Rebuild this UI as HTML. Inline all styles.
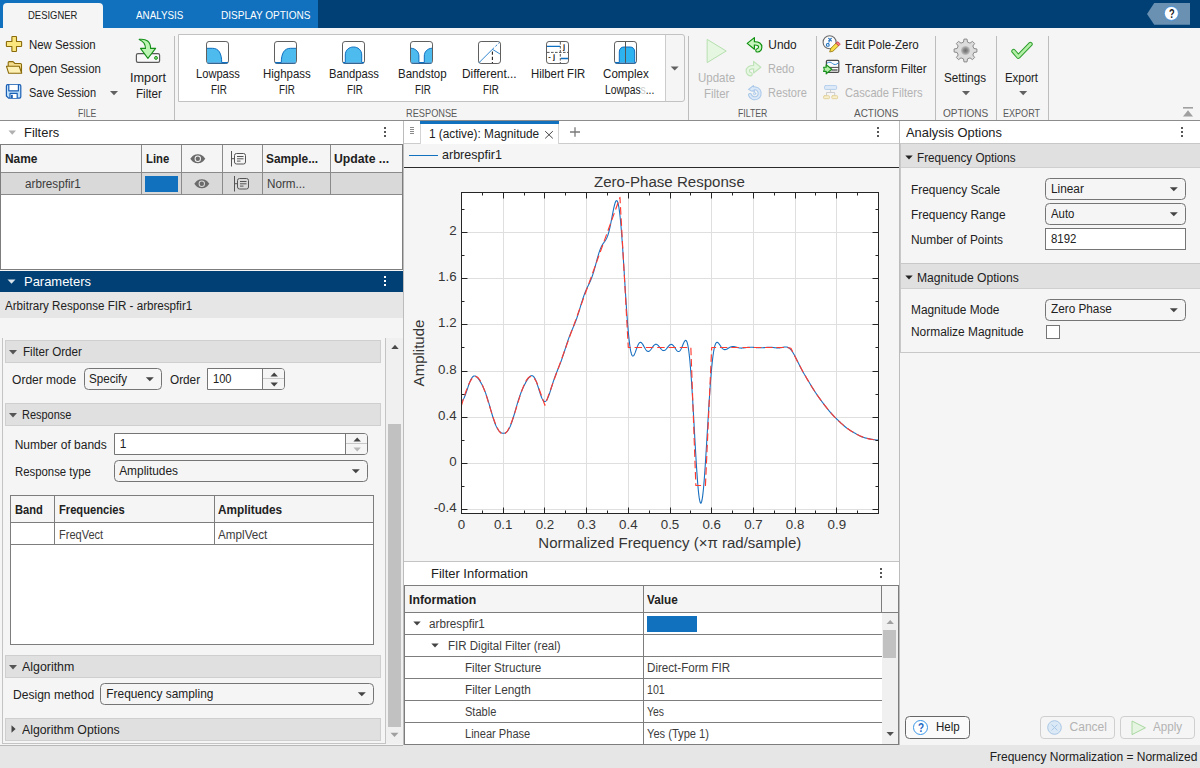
<!DOCTYPE html>
<html><head><meta charset="utf-8"><title>Filter Designer</title>
<style>
html,body{margin:0;padding:0}
body{width:1200px;height:768px;overflow:hidden;background:#f5f5f5;position:relative;font-family:"Liberation Sans",Arial,sans-serif;color:#212121}
.b{position:absolute;box-sizing:border-box}
.t{position:absolute;white-space:nowrap;line-height:1;margin:0;padding:0;transform-origin:0 0}
.hd{background:#e0e0e0;border:1px solid #cfcfcf}
.dd{background:#f5f5f5;border:1px solid #757575;border-radius:4.5px}
.ed{background:#fff;border:1px solid #757575}
.vl{width:1px;background:#bdbdbd}
.hl{height:1px;background:#7d7d7d}
svg{position:absolute;overflow:visible}
</style></head><body>
<!-- tab bar -->
<div class="b" style="left:0;top:0;width:1200px;height:28px;background:#004074"></div>
<div class="b" style="left:0;top:0;width:318px;height:28px;background:#1171be"></div>
<div class="b" style="left:3px;top:3px;width:100px;height:25px;background:#f5f5f5;border-radius:4px 4px 0 0"></div>
<svg style="left:1146px;top:3px" width="45" height="22"><path d="M1 11L8.25 0H44V21.75H8.25Z" fill="#6a90b2"/><circle cx="25.4" cy="10.4" r="7" fill="#fff" stroke="#3a8ee0" stroke-width="0.8"/></svg>
<!-- toolstrip -->
<div class="b" style="left:0;top:28px;width:1200px;height:92px;background:#f5f5f5"></div>
<div class="b hl" style="left:0;top:120px;width:1200px;background:#8c8c8c"></div>
<div class="b vl" style="left:174px;top:36px;height:84px"></div>
<div class="b vl" style="left:688px;top:36px;height:84px"></div>
<div class="b vl" style="left:816px;top:36px;height:84px"></div>
<div class="b vl" style="left:935px;top:36px;height:84px"></div>
<div class="b vl" style="left:996px;top:36px;height:84px"></div>
<div class="b vl" style="left:1048px;top:36px;height:84px"></div>
<div class="b" style="left:178px;top:34px;width:507px;height:68px;background:#f5f5f5;border:1px solid #c2c2c2;border-radius:0 3px 3px 0"></div>
<div class="b" style="left:179px;top:35px;width:487px;height:66px;background:#fff;border-right:1px solid #cccccc"></div>
<!-- File icons -->
<svg style="left:0;top:0" width="1200" height="120"><g stroke-linejoin="round">
<path d="M12.5 36.5H15.9Q16.5 36.5 16.5 37.1V41.5H21Q21.6 41.5 21.6 42.1V45.9Q21.6 46.5 21 46.5H16.5V50.9Q16.5 51.5 15.9 51.5H12.5Q11.9 51.5 11.9 50.9V46.5H7Q6.4 46.5 6.4 45.9V42.1Q6.4 41.5 7 41.5H11.9V37.1Q11.9 36.5 12.5 36.5Z" fill="#fbe77e" stroke="#8a6a0a" stroke-width="1.1"/>
<path d="M8.2 66V62.6Q8.2 61.6 9.2 61.6H13L14.9 63.5H20.4Q21.5 63.5 21.5 64.6V73" fill="#f3dd8c" stroke="#8a6a0a" stroke-width="1.1"/>
<path d="M6.5 66.3H19.2L21.7 73.3H8.7Z" fill="#fdf0b4" stroke="#8a6a0a" stroke-width="1.1"/>
<path d="M7.6 84.6H19.4Q20.8 84.6 20.8 86V96.8Q20.8 98.2 19.4 98.2H8.6L6.4 96V86Q6.4 84.6 7.6 84.6Z" fill="#bfe0fb" stroke="#1a5fb4" stroke-width="1.2"/>
<path d="M8.8 84.8V90.8H18.4V84.8" fill="#fff" stroke="#1a5fb4" stroke-width="1.2"/>
<path d="M10 98V93.4H17.2V98" fill="#fff" stroke="#1a5fb4" stroke-width="1.2"/>
<rect x="11" y="94.8" width="1.8" height="3.2" fill="#1a5fb4"/>
<path d="M110 91H118L114 95.3Z" fill="#616161"/>
<!-- Import -->
<rect x="136.4" y="53.6" width="23.2" height="8.8" rx="1.6" fill="#f8f8f8" stroke="#5a5a5a" stroke-width="1.2"/>
<circle cx="156" cy="57.9" r="1.5" fill="#7bd06c" stroke="#2a9a2a" stroke-width="1"/>
<path d="M139.2 39.4C146.5 38.6 150.6 41.5 150.6 48.4H155.6L147.9 58.4L140.5 48.4H145.5C145.5 44.5 143.5 41.2 139.2 39.4Z" fill="#bdf5b4" stroke="#16901a" stroke-width="1.1"/>
</g></svg>
<!-- gallery icons -->
<svg style="left:206px;top:41px" width="23" height="23"><rect x="0.5" y="0.5" width="22" height="22" rx="2.6" fill="#fff" stroke="#5f5f5f"/><path d="M1 7.3H6.5C12.5 7.3 15.7 12 15.7 21.5H1Z" fill="#4dbbee"/><path d="M1 7.3H6.5C12.5 7.3 15.7 12 15.7 21.5H22" fill="none" stroke="#0e6ec0" stroke-width="1"/><path d="M1.5 22H21.5" stroke="#0e6ec0" stroke-width="1"/></svg>
<svg style="left:274px;top:41px" width="23" height="23"><rect x="0.5" y="0.5" width="22" height="22" rx="2.6" fill="#fff" stroke="#5f5f5f"/><path d="M22 7.3H16.5C10.5 7.3 7.3 12 7.3 21.5H22Z" fill="#4dbbee"/><path d="M22 7.3H16.5C10.5 7.3 7.3 12 7.3 21.5H1" fill="none" stroke="#0e6ec0" stroke-width="1"/><path d="M1.5 22H21.5" stroke="#0e6ec0" stroke-width="1"/></svg>
<svg style="left:342px;top:41px" width="23" height="23"><rect x="0.5" y="0.5" width="22" height="22" rx="2.6" fill="#fff" stroke="#5f5f5f"/><path d="M3.3 21.5V14C3.3 9 7 6 11.5 6S19.7 9 19.7 14V21.5Z" fill="#4dbbee"/><path d="M1 21.5H3.3V14C3.3 9 7 6 11.5 6S19.7 9 19.7 14V21.5H22" fill="none" stroke="#0e6ec0" stroke-width="1"/><path d="M1.5 22H21.5" stroke="#0e6ec0" stroke-width="1"/></svg>
<svg style="left:410px;top:41px" width="23" height="23"><rect x="0.5" y="0.5" width="22" height="22" rx="2.6" fill="#fff" stroke="#5f5f5f"/><path d="M1 7.2C6 7.6 8.9 11 8.9 15V21.5H1Z" fill="#4dbbee"/><path d="M22 7.2C17 7.6 14.3 11 14.3 15V21.5H22Z" fill="#4dbbee"/><path d="M1 7.2C6 7.6 8.9 11 8.9 15V21.5H14.3V15C14.3 11 17 7.6 22 7.2" fill="none" stroke="#0e6ec0" stroke-width="1"/><path d="M1.5 22H21.5" stroke="#0e6ec0" stroke-width="1"/></svg>
<svg style="left:478px;top:41px" width="23" height="23"><rect x="0.5" y="0.5" width="22" height="22" rx="2.6" fill="#fff" stroke="#5f5f5f"/><path d="M1 21.7L14.4 8.3L21.9 12.9" fill="none" stroke="#1a78c8" stroke-width="0.9"/><path d="M14.4 8.3L21.5 1.5" fill="none" stroke="#1a78c8" stroke-width="0.9" stroke-dasharray="2.4 1.8"/><path d="M14.4 10.5V22" fill="none" stroke="#222" stroke-width="1.1" stroke-dasharray="3.2 2"/></svg>
<svg style="left:546px;top:41px" width="23" height="23"><rect x="0.5" y="0.5" width="22" height="22" rx="2.6" fill="#fff" stroke="#5f5f5f"/><path d="M14.3 1V22M1 11.4H22" stroke="#555" stroke-width="1" stroke-dasharray="2.6 1.4"/><path d="M1 5.4H14M15 17.5H22" stroke="#0e6ec0" stroke-width="1.3"/><text font-family="Liberation Sans, sans-serif" font-size="7.6" font-weight="700" fill="#222"><tspan x="16.9" y="7.5">j</tspan><tspan x="2.2" y="17.8">-</tspan><tspan x="6.9" y="17.9">j</tspan></text></svg>
<svg style="left:614px;top:41px" width="23" height="23"><rect x="0.5" y="0.5" width="22" height="22" rx="2.6" fill="#fff" stroke="#5f5f5f"/><path d="M5.3 21.5V11C5.3 7.6 7.4 6 10 6H16C18.8 6 20.7 7.6 20.7 11V21.5Z" fill="#2db4f0"/><path d="M1 21.5H5.3V11C5.3 7.6 7.4 6 10 6H16C18.8 6 20.7 7.6 20.7 11V21.5H22" fill="none" stroke="#0e6ec0" stroke-width="1"/><path d="M11.5 1V22" stroke="#555" stroke-width="1"/><path d="M1.5 22H21.5" stroke="#0e6ec0" stroke-width="1"/></svg>
<svg style="left:0;top:0" width="1200" height="120"><g stroke-linejoin="round" stroke-linecap="round">
<path d="M670.7 66.4H678.7L674.7 70.6Z" fill="#616161"/>
<!-- Update Filter play -->
<path d="M707.5 39.6L726.2 51L707.5 62.4Z" fill="#e5f6e1" stroke="#b5e0ae" stroke-width="1"/>
<!-- undo -->
<path d="M754.4 43.4C758.5 43.2 760.4 45 760.2 47.2C760 49.2 758.8 50.2 757.4 50.4" stroke="#0f8f0f" stroke-width="4.4" fill="none"/>
<path d="M747.2 43.4L754.4 37.6V49.2Z" fill="#c8f5be" stroke="#0f8f0f" stroke-width="1.2"/>
<path d="M753.6 43.4C758.5 43.2 760.4 45 760.2 47.2C760 49.2 758.8 50.2 757.4 50.4" stroke="#c8f5be" stroke-width="2.2" fill="none"/>
<!-- redo -->
<path d="M753.6 67.2C749.5 67 747.6 68.8 747.8 71C748 73 749.2 74 750.6 74.2" stroke="#bfe3b8" stroke-width="4.4" fill="none"/>
<path d="M760.8 67.2L753.6 61.4V73Z" fill="#e5f6e1" stroke="#bfe3b8" stroke-width="1.2"/>
<path d="M754.4 67.2C749.5 67 747.6 68.8 747.8 71C748 73 749.2 74 750.6 74.2" stroke="#e5f6e1" stroke-width="2.2" fill="none"/>
<!-- restore -->
<path d="M751.5 89.5A5 5 0 1 1 750 95" stroke="#a9c8ea" stroke-width="4" fill="none"/>
<path d="M748.6 89.4L753.4 85.6L754.4 91.6Z" fill="#dbe8f7" stroke="#a9c8ea" stroke-width="1.1"/>
<path d="M751.5 89.5A5 5 0 1 1 750 95" stroke="#dbe8f7" stroke-width="2" fill="none"/>
<circle cx="754.6" cy="93.6" r="1.2" fill="#dbe8f7" stroke="#a9c8ea" stroke-width="0.9"/>
<!-- pole-zero -->
<circle cx="829.6" cy="42.3" r="6.5" fill="#fbfbfb" stroke="#6a6a6a" stroke-width="1.1"/>
<path d="M828.7 38.3L831.3 40.9M831.3 38.3L828.7 40.9" stroke="#1a6fc0" stroke-width="1.2"/>
<path d="M829.6 41L828.4 43.6" stroke="#1a6fc0" stroke-width="0.8" stroke-dasharray="1.2 1"/>
<circle cx="827.8" cy="44.9" r="1.4" fill="none" stroke="#1a6fc0" stroke-width="1.1"/>
<path d="M829.8 51.6L830.8 48.4L836.2 43L838.8 45.6L833.2 51Z" fill="#f9dc4a" stroke="#9c7e10" stroke-width="0.9"/>
<path d="M836.2 43L837.2 42Q837.8 41.6 838.4 42.2L839.6 43.4Q840.2 44 839.8 44.6L838.8 45.6Z" fill="#f47c7c" stroke="#c8384a" stroke-width="0.9"/>
<!-- transform -->
<rect x="826.4" y="60.4" width="12.4" height="12" rx="1.2" fill="#fafafa" stroke="#4a4a4a" stroke-width="1.2"/>
<path d="M827 67.4H838.4" stroke="#4a4a4a" stroke-width="1"/>
<path d="M827.2 63C829.4 61.4 831 62.2 832.6 63.6S836.4 65 838.2 63" fill="none" stroke="#3a8fd8" stroke-width="1"/>
<rect x="831.5" y="69" width="6" height="2" fill="#8a8a8a"/>
<path d="M823.6 67.2H826.2V64.8L831.8 69.3L826.2 73.8V71.4H823.6L824.3 69.3Z" fill="#b4f0a8" stroke="#16901a" stroke-width="1.1"/>
<!-- cascade -->
<rect x="824.6" y="85.6" width="12" height="3.8" rx="0.8" fill="#dfeaf8" stroke="#b4cfec" stroke-width="1"/>
<path d="M830.6 89.6V92.5M826.5 95.4V92.5H834.7V95.4" fill="none" stroke="#cdcdcd" stroke-width="1"/>
<rect x="823.6" y="95.7" width="5.8" height="3" rx="0.8" fill="#f8efcc" stroke="#e2d29c" stroke-width="1"/>
<rect x="831.8" y="95.7" width="5.8" height="3" rx="0.8" fill="#f8efcc" stroke="#e2d29c" stroke-width="1"/>
<!-- arrows -->
<path d="M962 91H970L966 95.3Z" fill="#616161"/>
<path d="M1019.2 91H1027.2L1023.2 95.3Z" fill="#616161"/>
<!-- export check -->
<path d="M1013.6 51.2L1018.3 56.6L1030.4 44.2" stroke="#2e9e2e" stroke-width="4.6" fill="none"/>
<path d="M1013.6 51.2L1018.3 56.6L1030.4 44.2" stroke="#b4f0a8" stroke-width="2.6" fill="none"/>
<!-- collapse -->
<rect x="1183" y="107" width="10" height="1.6" fill="#a0a0a0"/>
<path d="M1188 110.3L1193 116.6H1183Z" fill="#a0a0a0"/>
</g></svg>
<!-- settings gear -->
<svg style="left:952.8px;top:38.1px" width="25" height="25" viewBox="-12.5 -12.5 25 25"><defs><radialGradient id="gg"><stop offset="0" stop-color="#6e6e6e"/><stop offset="0.45" stop-color="#8a8a8a"/><stop offset="1" stop-color="#c4c4c4"/></radialGradient></defs><path d="M11.40 -1.53L11.40 1.53L8.36 2.01L7.33 4.49L9.14 6.98L6.98 9.14L4.49 7.33L2.01 8.36L1.53 11.40L-1.53 11.40L-2.01 8.36L-4.49 7.33L-6.98 9.14L-9.14 6.98L-7.33 4.49L-8.36 2.01L-11.40 1.53L-11.40 -1.53L-8.36 -2.01L-7.33 -4.49L-9.14 -6.98L-6.98 -9.14L-4.49 -7.33L-2.01 -8.36L-1.53 -11.40L1.53 -11.40L2.01 -8.36L4.49 -7.33L6.98 -9.14L9.14 -6.98L7.33 -4.49L8.36 -2.01Z" fill="#dcdcdc" stroke="#8a8a8a" stroke-width="1" stroke-linejoin="round"/><circle r="4.6" fill="url(#gg)"/></svg>

<!-- LEFT: Filters panel -->
<div class="b" style="left:0;top:121px;width:403px;height:23px;background:#fff"></div>
<svg style="left:7.8px;top:129.5px" width="10" height="6"><path d="M0.5 0.5H8L4.25 4.7Z" fill="#b0b0b0"/></svg>
<svg style="left:383px;top:127px" width="4" height="11"><rect x="1" y="0" width="2" height="2" fill="#575757"/><rect x="1" y="4" width="2" height="2" fill="#575757"/><rect x="1" y="8" width="2" height="2" fill="#575757"/></svg>
<div class="b" style="left:0;top:144px;width:403px;height:126px;background:#fff;border:1px solid #7d7d7d"></div>
<div class="b" style="left:1px;top:145px;width:401px;height:27px;background:#f5f5f5"></div>
<div class="b" style="left:1px;top:172px;width:401px;height:22px;background:#d9d9d9"></div>
<div class="b hl" style="left:1px;top:172px;width:401px;background:#8a8a8a"></div>
<div class="b hl" style="left:1px;top:194px;width:401px;background:#8a8a8a"></div>
<div class="b vl" style="left:141px;top:145px;height:49px;background:#8a8a8a"></div>
<div class="b vl" style="left:181px;top:145px;height:49px;background:#8a8a8a"></div>
<div class="b vl" style="left:222px;top:145px;height:49px;background:#8a8a8a"></div>
<div class="b vl" style="left:262px;top:145px;height:49px;background:#8a8a8a"></div>
<div class="b vl" style="left:330px;top:145px;height:49px;background:#8a8a8a"></div>
<div class="b" style="left:145px;top:176px;width:33px;height:16px;background:#1171be"></div>
<svg style="left:190px;top:154px" width="16" height="10"><path d="M0.3 4.8C3 0.8 6 0.3 7.8 0.3S12.6 0.8 15.3 4.8C12.6 8.8 9.6 9.3 7.8 9.3S3 8.8 0.3 4.8Z" fill="#6b6b6b"/><circle cx="7.8" cy="4.8" r="3.2" fill="#f5f5f5"/><circle cx="7.8" cy="4.8" r="2.2" fill="#6b6b6b"/></svg>
<svg style="left:194px;top:179px" width="16" height="10"><path d="M0.3 4.8C3 0.8 6 0.3 7.8 0.3S12.6 0.8 15.3 4.8C12.6 8.8 9.6 9.3 7.8 9.3S3 8.8 0.3 4.8Z" fill="#6b6b6b"/><circle cx="7.8" cy="4.8" r="3.2" fill="#d9d9d9"/><circle cx="7.8" cy="4.8" r="2.2" fill="#6b6b6b"/></svg>
<svg style="left:230px;top:151px" width="17" height="16"><path d="M1.5 0V15.5M1.5 7.7H4" stroke="#555" stroke-width="1" fill="none"/><rect x="4.5" y="2.5" width="11" height="10.5" rx="2" fill="none" stroke="#555" stroke-width="1"/><path d="M7 5.5H13.5M7 7.8H13.5M7 10.1H10.5" stroke="#555" stroke-width="1"/></svg>
<svg style="left:233px;top:176px" width="17" height="16"><path d="M1.5 0V15.5M1.5 7.7H4" stroke="#555" stroke-width="1" fill="none"/><rect x="4.5" y="2.5" width="11" height="10.5" rx="2" fill="none" stroke="#555" stroke-width="1"/><path d="M7 5.5H13.5M7 7.8H13.5M7 10.1H10.5" stroke="#555" stroke-width="1"/></svg>
<!-- Parameters panel -->
<div class="b" style="left:0;top:271px;width:403px;height:21px;background:#004074"></div>
<svg style="left:7px;top:279px" width="10" height="6"><path d="M0.5 0.5H8.5L4.5 4.8Z" fill="#d8e2ec"/></svg>
<svg style="left:383px;top:276px" width="4" height="11"><rect x="1" y="0" width="2" height="2" fill="#fff"/><rect x="1" y="4" width="2" height="2" fill="#fff"/><rect x="1" y="8" width="2" height="2" fill="#fff"/></svg>
<div class="b" style="left:0;top:292px;width:403px;height:26px;background:#e6e6e6"></div>
<div class="b" style="left:0;top:318px;width:404px;height:427px;background:#f5f5f5"></div>
<div class="b" style="left:2px;top:338px;width:384px;height:406px;border:1px solid #c4c4c4;border-top:none;background:#f5f5f5"></div>
<div class="b hl" style="left:0;top:745px;width:403px;background:#b8b8b8"></div>
<!-- scrollbar -->
<div class="b" style="left:386px;top:338px;width:17px;height:406px;background:#f0f0f0"></div>
<div class="b" style="left:388px;top:424px;width:13px;height:303px;background:#c1c1c1"></div>
<svg style="left:390.5px;top:344px" width="9" height="6"><path d="M0.3 4.9L4 0.7L7.7 4.9Z" fill="#4a4a4a"/></svg>
<svg style="left:390px;top:732px" width="9" height="6"><path d="M0.5 0.8L4.5 5L8.5 0.8Z" fill="#a0a0a0"/></svg>
<!-- section headers -->
<div class="b hd" style="left:5px;top:340px;width:376px;height:23px"></div>
<svg style="left:9px;top:349px" width="9" height="6"><path d="M0 1H8L4 5.4Z" fill="#555"/></svg>
<div class="b hd" style="left:5px;top:403px;width:376px;height:23px"></div>
<svg style="left:9px;top:412px" width="9" height="6"><path d="M0 1H8L4 5.4Z" fill="#555"/></svg>
<div class="b hd" style="left:5px;top:655px;width:376px;height:23px"></div>
<svg style="left:9px;top:664px" width="9" height="6"><path d="M0 1H8L4 5.4Z" fill="#555"/></svg>
<div class="b hd" style="left:5px;top:718px;width:376px;height:23px"></div>
<svg style="left:11px;top:725px" width="6" height="9"><path d="M0.5 0.3V7.7L4.6 4Z" fill="#444"/></svg>
<!-- order row -->
<div class="b dd" style="left:84px;top:368px;width:78px;height:22px"></div>
<svg style="left:145px;top:377px" width="9" height="6"><path d="M0.8 0.3H8.8L4.8 4.3Z" fill="#444"/></svg>
<div class="b ed" style="left:207px;top:368px;width:78px;height:22px;border-radius:0 4px 4px 0"></div>
<div class="b" style="left:262px;top:369px;width:22px;height:20px;background:#f5f5f5;border-left:1px solid #7a7a7a;border-radius:0 3px 3px 0"></div>
<div class="b hl" style="left:263px;top:378px;width:21px;background:#c8c8c8"></div>
<svg style="left:269.8px;top:372px" width="9" height="5"><path d="M0.5 4.5L4.2 0.6L7.9 4.5Z" fill="#444"/></svg>
<svg style="left:269.8px;top:382.4px" width="9" height="5"><path d="M0.5 0.5L4.2 4.4L7.9 0.5Z" fill="#444"/></svg>
<!-- bands -->
<div class="b ed" style="left:114px;top:433px;width:254px;height:22px;border-radius:0 4px 4px 0"></div>
<div class="b" style="left:345px;top:434px;width:22px;height:20px;background:#f5f5f5;border-left:1px solid #7a7a7a;border-radius:0 3px 3px 0"></div>
<div class="b hl" style="left:346px;top:443px;width:21px;background:#c8c8c8"></div>
<svg style="left:353px;top:437px" width="9" height="5"><path d="M0.5 4.5L4.2 0.6L7.9 4.5Z" fill="#444"/></svg>
<svg style="left:353px;top:447.4px" width="9" height="5"><path d="M0.5 0.5L4.2 4.4L7.9 0.5Z" fill="#b8b8b8"/></svg>
<div class="b dd" style="left:114px;top:460px;width:254px;height:22px"></div>
<svg style="left:351px;top:469px" width="9" height="6"><path d="M0.8 0.3H8.8L4.8 4.3Z" fill="#444"/></svg>
<!-- band table -->
<div class="b" style="left:10px;top:495px;width:364px;height:150px;background:#fff;border:1px solid #7d7d7d"></div>
<div class="b" style="left:11px;top:496px;width:362px;height:26px;background:#f5f5f5"></div>
<div class="b hl" style="left:10px;top:522px;width:364px"></div>
<div class="b hl" style="left:10px;top:544px;width:364px"></div>
<div class="b vl" style="left:54px;top:496px;height:49px;background:#7d7d7d"></div>
<div class="b vl" style="left:214px;top:496px;height:49px;background:#7d7d7d"></div>
<!-- algorithm -->
<div class="b dd" style="left:100px;top:683px;width:274px;height:22px"></div>
<svg style="left:357px;top:692px" width="9" height="6"><path d="M0.8 0.3H8.8L4.8 4.3Z" fill="#444"/></svg>

<!-- CENTER -->
<div class="b vl" style="left:403px;top:121px;height:624px;background:#bcbcbc"></div>
<div class="b" style="left:404px;top:121px;width:495px;height:23px;background:#fff"></div>
<div class="b hl" style="left:404px;top:143px;width:495px;background:#cccccc"></div>
<div class="b" style="left:420px;top:121px;width:139px;height:23px;background:#fff;border-left:1px solid #d4d4d4;border-right:1px solid #d4d4d4"></div>
<div class="b" style="left:420px;top:121px;width:139px;height:3px;background:#1171be"></div>
<svg style="left:410px;top:127px" width="5" height="8"><path d="M0 0.5H4M0 2.5H4M0 4.5H4M0 6.5H4" stroke="#8a8a8a" stroke-width="1"/></svg>
<svg style="left:544px;top:130px" width="10" height="10"><path d="M1.2 1.2L8.8 8.4M8.8 1.2L1.2 8.4" stroke="#444" stroke-width="1"/></svg>
<svg style="left:569px;top:126px" width="12" height="12"><path d="M6 1.2V10.8M1 6H11" stroke="#7a7a7a" stroke-width="1.3"/></svg>
<svg style="left:876px;top:127px" width="4" height="11"><rect x="1" y="0" width="2" height="2" fill="#575757"/><rect x="1" y="4" width="2" height="2" fill="#575757"/><rect x="1" y="8" width="2" height="2" fill="#575757"/></svg>
<div class="b" style="left:404px;top:144px;width:495px;height:23px;background:#f5f5f5"></div>
<div class="b" style="left:409px;top:154.5px;width:29px;height:1px;background:#1171be"></div>
<div class="b hl" style="left:404px;top:167px;width:495px;background:#2a2a2a"></div>
<div class="b" style="left:404px;top:168px;width:495px;height:393px;background:#f5f5f5"></div>
<div class="b hl" style="left:404px;top:561px;width:495px;background:#c4c4c4"></div>
<!-- filter info -->
<div class="b" style="left:404px;top:562px;width:495px;height:23px;background:#fff"></div>
<svg style="left:879px;top:568px" width="4" height="11"><rect x="1" y="0" width="2" height="2" fill="#575757"/><rect x="1" y="4" width="2" height="2" fill="#575757"/><rect x="1" y="8" width="2" height="2" fill="#575757"/></svg>
<div class="b" style="left:404px;top:585px;width:495px;height:160px;background:#fff;border:1px solid #7d7d7d"></div>
<div class="b" style="left:405px;top:586px;width:493px;height:27px;background:#f5f5f5"></div>
<div class="b hl" style="left:405px;top:612px;width:493px"></div>
<div class="b hl" style="left:405px;top:634px;width:477px"></div>
<div class="b hl" style="left:405px;top:656px;width:477px"></div>
<div class="b hl" style="left:405px;top:678px;width:477px"></div>
<div class="b hl" style="left:405px;top:700px;width:477px"></div>
<div class="b hl" style="left:405px;top:722px;width:477px"></div>
<div class="b vl" style="left:643px;top:586px;height:158px;background:#7d7d7d"></div>
<div class="b vl" style="left:881px;top:586px;height:27px;background:#7d7d7d"></div>
<div class="b" style="left:882px;top:613px;width:16px;height:131px;background:#f0f0f0"></div>
<div class="b" style="left:883px;top:630px;width:13px;height:28px;background:#c1c1c1"></div>
<svg style="left:886px;top:619px" width="9" height="6"><path d="M0.5 5L4.2 1L7.9 5Z" fill="#a0a0a0"/></svg>
<svg style="left:886px;top:731px" width="9" height="6"><path d="M0.5 1L4.2 5L7.9 1Z" fill="#505050"/></svg>
<div class="b" style="left:647px;top:616px;width:50px;height:16px;background:#1171be"></div>
<svg style="left:413.4px;top:621px" width="9" height="6"><path d="M0.3 0.5H7.7L4 4.6Z" fill="#444"/></svg>
<svg style="left:431px;top:643px" width="9" height="6"><path d="M0.3 0.5H7.7L4 4.6Z" fill="#444"/></svg>

<!-- RIGHT -->
<div class="b vl" style="left:899px;top:121px;height:624px;background:#bcbcbc"></div>
<div class="b" style="left:900px;top:121px;width:300px;height:23px;background:#fff"></div>
<svg style="left:1180px;top:127px" width="4" height="11"><rect x="1" y="0" width="2" height="2" fill="#575757"/><rect x="1" y="4" width="2" height="2" fill="#575757"/><rect x="1" y="8" width="2" height="2" fill="#575757"/></svg>
<div class="b" style="left:900px;top:144px;width:300px;height:601px;background:#f5f5f5"></div>
<div class="b" style="left:900px;top:143px;width:300px;height:121px;border:1px solid #c8c8c8;border-right:none"></div>
<div class="b" style="left:901px;top:144px;width:299px;height:24px;background:#e0e0e0;border-bottom:1px solid #cfcfcf"></div>
<svg style="left:905px;top:155px" width="9" height="6"><path d="M0.3 0.5H7.7L4 4.6Z" fill="#222"/></svg>
<div class="b" style="left:900px;top:263px;width:300px;height:90px;border:1px solid #c8c8c8;border-right:none"></div>
<div class="b" style="left:901px;top:264px;width:299px;height:25px;background:#e0e0e0;border-bottom:1px solid #cfcfcf"></div>
<svg style="left:905px;top:275px" width="9" height="6"><path d="M0.3 0.5H7.7L4 4.6Z" fill="#222"/></svg>
<div class="b dd" style="left:1045px;top:178px;width:141px;height:22px"></div>
<svg style="left:1169px;top:187px" width="9" height="6"><path d="M0.8 0.3H8.8L4.8 4.3Z" fill="#444"/></svg>
<div class="b dd" style="left:1045px;top:203px;width:141px;height:22px"></div>
<svg style="left:1169px;top:212px" width="9" height="6"><path d="M0.8 0.3H8.8L4.8 4.3Z" fill="#444"/></svg>
<div class="b ed" style="left:1045px;top:228px;width:141px;height:22px"></div>
<div class="b dd" style="left:1045px;top:299px;width:141px;height:22px"></div>
<svg style="left:1169px;top:308px" width="9" height="6"><path d="M0.8 0.3H8.8L4.8 4.3Z" fill="#444"/></svg>
<div class="b ed" style="left:1046px;top:325px;width:14px;height:14px"></div>
<!-- buttons -->
<div class="b" style="left:905px;top:716px;width:65px;height:23px;background:#fafafa;border:1px solid #666;border-radius:4.5px"></div>
<svg style="left:912px;top:719px" width="17" height="17"><circle cx="8.5" cy="8.5" r="7" fill="#fff" stroke="#3a96e8" stroke-width="1"/></svg>
<div class="b" style="left:1040px;top:716px;width:75px;height:23px;background:#f5f5f5;border:1px solid #cfcfcf;border-radius:4px"></div>
<svg style="left:1046.8px;top:720px" width="15" height="15"><circle cx="7.5" cy="7.5" r="6.8" fill="#dbe8f5" stroke="#a9c7e6" stroke-width="1"/><path d="M4.6 4.6L10.4 10.4M10.4 4.6L4.6 10.4" stroke="#a9c7e6" stroke-width="1"/></svg>
<div class="b" style="left:1120px;top:716px;width:75px;height:23px;background:#f5f5f5;border:1px solid #cfcfcf;border-radius:4px"></div>
<svg style="left:1131px;top:720px" width="16" height="16"><path d="M1 1L14.4 7.8L1 14.6Z" fill="#e6f4e2" stroke="#a8d8a0" stroke-width="1" stroke-linejoin="round"/></svg>
<!-- status bar -->
<div class="b" style="left:0;top:745px;width:1200px;height:23px;background:#e6e6e6"></div>
<div class="b hl" style="left:0;top:745px;width:403px;background:#b8b8b8"></div>

<svg id="plot" width="1200" height="768" viewBox="0 0 1200 768" style="position:absolute;left:0;top:0;pointer-events:none">
<rect x="461.5" y="192.5" width="417.0" height="321.0" fill="#fff"/>
<path d="M503.5 192.5V513.5M544.5 192.5V513.5M586.5 192.5V513.5M628.5 192.5V513.5M670.5 192.5V513.5M711.5 192.5V513.5M753.5 192.5V513.5M795.5 192.5V513.5M836.5 192.5V513.5M461.5 232.5H878.5M461.5 278.5H878.5M461.5 324.5H878.5M461.5 371.5H878.5M461.5 417.5H878.5M461.5 463.5H878.5M461.5 509.5H878.5" stroke="#dfdfdf" stroke-width="1" fill="none"/>
<clipPath id="cp"><rect x="461.5" y="192.5" width="417.0" height="321.0"/></clipPath>
<g clip-path="url(#cp)"><path d="M461.50 400.53 L461.80 400.50 L462.10 400.38 L462.39 400.20 L462.69 399.94 L462.99 399.62 L463.29 399.22 L463.58 398.76 L463.88 398.24 L464.18 397.66 L464.48 397.03 L464.78 396.34 L465.07 395.61 L465.37 394.84 L465.67 394.03 L465.97 393.19 L466.27 392.33 L466.56 391.44 L466.86 390.54 L467.16 389.63 L467.46 388.72 L467.75 387.81 L468.05 386.91 L468.35 386.02 L468.65 385.15 L468.95 384.30 L469.24 383.47 L469.54 382.68 L469.84 381.91 L470.14 381.19 L470.44 380.50 L470.73 379.86 L471.03 379.27 L471.33 378.72 L471.63 378.21 L471.93 377.76 L472.22 377.36 L472.52 377.01 L472.82 376.71 L473.12 376.46 L473.41 376.26 L473.71 376.10 L474.01 376.00 L474.31 375.94 L474.61 375.93 L474.90 375.96 L475.20 376.03 L475.50 376.14 L475.80 376.29 L476.10 376.47 L476.39 376.69 L476.69 376.93 L476.99 377.21 L477.29 377.51 L477.58 377.83 L477.88 378.18 L478.18 378.55 L478.48 378.94 L478.78 379.35 L479.07 379.78 L479.37 380.22 L479.67 380.68 L479.97 381.15 L480.26 381.64 L480.56 382.14 L480.86 382.65 L481.16 383.18 L481.46 383.73 L481.75 384.28 L482.05 384.86 L482.35 385.45 L482.65 386.05 L482.95 386.68 L483.24 387.32 L483.54 387.97 L483.84 388.65 L484.14 389.35 L484.44 390.07 L484.73 390.81 L485.03 391.57 L485.33 392.35 L485.63 393.16 L485.92 393.98 L486.22 394.83 L486.52 395.71 L486.82 396.60 L487.12 397.51 L487.41 398.44 L487.71 399.40 L488.01 400.37 L488.31 401.35 L488.61 402.35 L488.90 403.37 L489.20 404.39 L489.50 405.43 L489.80 406.47 L490.09 407.51 L490.39 408.56 L490.69 409.61 L490.99 410.66 L491.29 411.70 L491.58 412.73 L491.88 413.75 L492.18 414.76 L492.48 415.76 L492.77 416.74 L493.07 417.70 L493.37 418.64 L493.67 419.55 L493.97 420.44 L494.26 421.31 L494.56 422.14 L494.86 422.95 L495.16 423.73 L495.46 424.47 L495.75 425.18 L496.05 425.86 L496.35 426.51 L496.65 427.12 L496.94 427.71 L497.24 428.25 L497.54 428.77 L497.84 429.25 L498.14 429.70 L498.43 430.12 L498.73 430.51 L499.03 430.87 L499.33 431.20 L499.63 431.51 L499.92 431.78 L500.22 432.04 L500.52 432.26 L500.82 432.46 L501.12 432.64 L501.41 432.80 L501.71 432.93 L502.01 433.04 L502.31 433.13 L502.60 433.20 L502.90 433.25 L503.20 433.28 L503.50 433.28 L503.80 433.26 L504.09 433.23 L504.39 433.17 L504.69 433.08 L504.99 432.98 L505.28 432.84 L505.58 432.69 L505.88 432.50 L506.18 432.29 L506.48 432.05 L506.77 431.79 L507.07 431.49 L507.37 431.16 L507.67 430.79 L507.97 430.40 L508.26 429.97 L508.56 429.50 L508.86 429.01 L509.16 428.47 L509.45 427.90 L509.75 427.30 L510.05 426.66 L510.35 425.98 L510.65 425.27 L510.94 424.53 L511.24 423.75 L511.54 422.94 L511.84 422.10 L512.14 421.23 L512.43 420.34 L512.73 419.42 L513.03 418.48 L513.33 417.51 L513.62 416.53 L513.92 415.53 L514.22 414.51 L514.52 413.49 L514.82 412.45 L515.11 411.41 L515.41 410.37 L515.71 409.32 L516.01 408.28 L516.31 407.24 L516.60 406.20 L516.90 405.18 L517.20 404.16 L517.50 403.16 L517.79 402.17 L518.09 401.19 L518.39 400.23 L518.69 399.29 L518.99 398.37 L519.28 397.47 L519.58 396.59 L519.88 395.73 L520.18 394.89 L520.48 394.08 L520.77 393.28 L521.07 392.50 L521.37 391.75 L521.67 391.01 L521.97 390.29 L522.26 389.59 L522.56 388.91 L522.86 388.25 L523.16 387.60 L523.45 386.96 L523.75 386.34 L524.05 385.73 L524.35 385.13 L524.65 384.55 L524.94 383.98 L525.24 383.42 L525.54 382.87 L525.84 382.33 L526.13 381.80 L526.43 381.28 L526.73 380.78 L527.03 380.29 L527.33 379.81 L527.62 379.35 L527.92 378.91 L528.22 378.49 L528.52 378.08 L528.82 377.70 L529.11 377.35 L529.41 377.02 L529.71 376.72 L530.01 376.45 L530.30 376.22 L530.60 376.03 L530.90 375.87 L531.20 375.76 L531.50 375.69 L531.79 375.66 L532.09 375.69 L532.39 375.76 L532.69 375.88 L532.99 376.06 L533.28 376.29 L533.58 376.58 L533.88 376.92 L534.18 377.32 L534.48 377.77 L534.77 378.27 L535.07 378.83 L535.37 379.44 L535.67 380.10 L535.96 380.80 L536.26 381.55 L536.56 382.34 L536.86 383.16 L537.16 384.02 L537.45 384.91 L537.75 385.82 L538.05 386.75 L538.35 387.69 L538.64 388.65 L538.94 389.60 L539.24 390.56 L539.54 391.51 L539.84 392.44 L540.13 393.36 L540.43 394.25 L540.73 395.11 L541.03 395.94 L541.33 396.73 L541.62 397.47 L541.92 398.16 L542.22 398.79 L542.52 399.37 L542.82 399.89 L543.11 400.34 L543.41 400.72 L543.71 401.03 L544.01 401.27 L544.30 401.44 L544.60 401.53 L544.90 401.55 L545.20 401.49 L545.50 401.36 L545.79 401.15 L546.09 400.88 L546.39 400.53 L546.69 400.12 L546.99 399.65 L547.28 399.11 L547.58 398.52 L547.88 397.87 L548.18 397.17 L548.47 396.43 L548.77 395.65 L549.07 394.82 L549.37 393.97 L549.67 393.09 L549.96 392.18 L550.26 391.25 L550.56 390.31 L550.86 389.36 L551.15 388.40 L551.45 387.44 L551.75 386.48 L552.05 385.52 L552.35 384.56 L552.64 383.62 L552.94 382.69 L553.24 381.77 L553.54 380.86 L553.84 379.97 L554.13 379.09 L554.43 378.24 L554.73 377.40 L555.03 376.57 L555.33 375.76 L555.62 374.97 L555.92 374.19 L556.22 373.43 L556.52 372.67 L556.81 371.93 L557.11 371.19 L557.41 370.46 L557.71 369.74 L558.01 369.02 L558.30 368.29 L558.60 367.57 L558.90 366.84 L559.20 366.11 L559.50 365.37 L559.79 364.62 L560.09 363.86 L560.39 363.09 L560.69 362.31 L560.98 361.51 L561.28 360.70 L561.58 359.88 L561.88 359.04 L562.18 358.19 L562.47 357.32 L562.77 356.44 L563.07 355.55 L563.37 354.65 L563.66 353.74 L563.96 352.82 L564.26 351.89 L564.56 350.96 L564.86 350.02 L565.15 349.08 L565.45 348.15 L565.75 347.21 L566.05 346.28 L566.35 345.35 L566.64 344.43 L566.94 343.52 L567.24 342.62 L567.54 341.74 L567.84 340.86 L568.13 340.00 L568.43 339.15 L568.73 338.32 L569.03 337.51 L569.32 336.70 L569.62 335.92 L569.92 335.15 L570.22 334.39 L570.52 333.65 L570.81 332.92 L571.11 332.20 L571.41 331.49 L571.71 330.78 L572.00 330.09 L572.30 329.40 L572.60 328.71 L572.90 328.02 L573.20 327.33 L573.49 326.63 L573.79 325.93 L574.09 325.22 L574.39 324.50 L574.69 323.77 L574.98 323.03 L575.28 322.27 L575.58 321.50 L575.88 320.71 L576.17 319.90 L576.47 319.08 L576.77 318.23 L577.07 317.37 L577.37 316.49 L577.66 315.60 L577.96 314.68 L578.26 313.75 L578.56 312.81 L578.86 311.85 L579.15 310.88 L579.45 309.90 L579.75 308.92 L580.05 307.93 L580.35 306.94 L580.64 305.94 L580.94 304.95 L581.24 303.97 L581.54 302.99 L581.83 302.02 L582.13 301.06 L582.43 300.12 L582.73 299.19 L583.03 298.28 L583.32 297.39 L583.62 296.52 L583.92 295.67 L584.22 294.84 L584.51 294.04 L584.81 293.25 L585.11 292.49 L585.41 291.76 L585.71 291.04 L586.00 290.34 L586.30 289.67 L586.60 289.01 L586.90 288.36 L587.20 287.73 L587.49 287.10 L587.79 286.49 L588.09 285.88 L588.39 285.26 L588.68 284.65 L588.98 284.04 L589.28 283.41 L589.58 282.78 L589.88 282.13 L590.17 281.46 L590.47 280.78 L590.77 280.07 L591.07 279.34 L591.37 278.58 L591.66 277.80 L591.96 276.99 L592.26 276.15 L592.56 275.28 L592.86 274.38 L593.15 273.45 L593.45 272.49 L593.75 271.51 L594.05 270.50 L594.34 269.46 L594.64 268.41 L594.94 267.33 L595.24 266.24 L595.54 265.14 L595.83 264.04 L596.13 262.92 L596.43 261.81 L596.73 260.70 L597.02 259.60 L597.32 258.51 L597.62 257.44 L597.92 256.38 L598.22 255.36 L598.51 254.36 L598.81 253.39 L599.11 252.45 L599.41 251.55 L599.71 250.69 L600.00 249.87 L600.30 249.09 L600.60 248.35 L600.90 247.66 L601.19 247.00 L601.49 246.39 L601.79 245.81 L602.09 245.27 L602.39 244.77 L602.68 244.29 L602.98 243.84 L603.28 243.40 L603.58 242.99 L603.88 242.58 L604.17 242.18 L604.47 241.78 L604.77 241.37 L605.07 240.94 L605.37 240.50 L605.66 240.03 L605.96 239.52 L606.26 238.98 L606.56 238.39 L606.85 237.76 L607.15 237.06 L607.45 236.31 L607.75 235.50 L608.05 234.62 L608.34 233.67 L608.64 232.65 L608.94 231.56 L609.24 230.41 L609.53 229.19 L609.83 227.90 L610.13 226.55 L610.43 225.15 L610.73 223.70 L611.02 222.20 L611.32 220.67 L611.62 219.11 L611.92 217.54 L612.22 215.96 L612.51 214.38 L612.81 212.83 L613.11 211.31 L613.41 209.83 L613.70 208.41 L614.00 207.06 L614.30 205.81 L614.60 204.65 L614.90 203.61 L615.19 202.71 L615.49 201.95 L615.79 201.35 L616.09 200.93 L616.39 200.69 L616.68 200.65 L616.98 200.81 L617.28 201.20 L617.58 201.81 L617.88 202.66 L618.17 203.74 L618.47 205.07 L618.77 206.65 L619.07 208.48 L619.36 210.55 L619.66 212.87 L619.96 215.44 L620.26 218.24 L620.56 221.27 L620.85 224.53 L621.15 228.00 L621.45 231.67 L621.75 235.53 L622.04 239.56 L622.34 243.76 L622.64 248.09 L622.94 252.55 L623.24 257.12 L623.53 261.77 L623.83 266.49 L624.13 271.26 L624.43 276.05 L624.73 280.85 L625.02 285.64 L625.32 290.38 L625.62 295.07 L625.92 299.69 L626.21 304.20 L626.51 308.61 L626.81 312.88 L627.11 317.01 L627.41 320.97 L627.70 324.75 L628.00 328.35 L628.30 331.74 L628.60 334.93 L628.90 337.90 L629.19 340.64 L629.49 343.16 L629.79 345.44 L630.09 347.49 L630.38 349.31 L630.68 350.90 L630.98 352.26 L631.28 353.40 L631.58 354.32 L631.87 355.04 L632.17 355.56 L632.47 355.89 L632.77 356.05 L633.07 356.05 L633.36 355.89 L633.66 355.60 L633.96 355.19 L634.26 354.67 L634.55 354.06 L634.85 353.37 L635.15 352.63 L635.45 351.83 L635.75 351.00 L636.04 350.16 L636.34 349.31 L636.64 348.47 L636.94 347.65 L637.24 346.86 L637.53 346.11 L637.83 345.41 L638.13 344.77 L638.43 344.20 L638.73 343.70 L639.02 343.27 L639.32 342.92 L639.62 342.66 L639.92 342.47 L640.21 342.37 L640.51 342.35 L640.81 342.40 L641.11 342.54 L641.41 342.74 L641.70 343.01 L642.00 343.34 L642.30 343.72 L642.60 344.15 L642.89 344.61 L643.19 345.11 L643.49 345.63 L643.79 346.17 L644.09 346.72 L644.38 347.26 L644.68 347.80 L644.98 348.32 L645.28 348.82 L645.58 349.29 L645.87 349.73 L646.17 350.12 L646.47 350.47 L646.77 350.77 L647.06 351.01 L647.36 351.21 L647.66 351.34 L647.96 351.42 L648.26 351.44 L648.55 351.40 L648.85 351.31 L649.15 351.16 L649.45 350.96 L649.75 350.72 L650.04 350.44 L650.34 350.11 L650.64 349.76 L650.94 349.38 L651.24 348.97 L651.53 348.55 L651.83 348.13 L652.13 347.70 L652.43 347.27 L652.72 346.85 L653.02 346.45 L653.32 346.07 L653.62 345.72 L653.92 345.39 L654.21 345.11 L654.51 344.86 L654.81 344.65 L655.11 344.49 L655.40 344.37 L655.70 344.30 L656.00 344.28 L656.30 344.31 L656.60 344.39 L656.89 344.51 L657.19 344.67 L657.49 344.88 L657.79 345.13 L658.09 345.40 L658.38 345.71 L658.68 346.05 L658.98 346.40 L659.28 346.77 L659.57 347.15 L659.87 347.53 L660.17 347.91 L660.47 348.28 L660.77 348.64 L661.06 348.98 L661.36 349.30 L661.66 349.59 L661.96 349.85 L662.26 350.08 L662.55 350.26 L662.85 350.41 L663.15 350.51 L663.45 350.57 L663.75 350.58 L664.04 350.54 L664.34 350.46 L664.64 350.33 L664.94 350.16 L665.23 349.95 L665.53 349.71 L665.83 349.43 L666.13 349.12 L666.43 348.78 L666.72 348.43 L667.02 348.06 L667.32 347.68 L667.62 347.30 L667.91 346.92 L668.21 346.55 L668.51 346.19 L668.81 345.85 L669.11 345.54 L669.40 345.26 L669.70 345.01 L670.00 344.79 L670.30 344.63 L670.60 344.50 L670.89 344.43 L671.19 344.40 L671.49 344.42 L671.79 344.50 L672.09 344.62 L672.38 344.80 L672.68 345.02 L672.98 345.29 L673.28 345.60 L673.57 345.95 L673.87 346.32 L674.17 346.73 L674.47 347.16 L674.77 347.60 L675.06 348.05 L675.36 348.50 L675.66 348.94 L675.96 349.38 L676.25 349.79 L676.55 350.17 L676.85 350.52 L677.15 350.82 L677.45 351.08 L677.74 351.28 L678.04 351.42 L678.34 351.50 L678.64 351.52 L678.94 351.46 L679.23 351.33 L679.53 351.13 L679.83 350.85 L680.13 350.50 L680.42 350.09 L680.72 349.61 L681.02 349.06 L681.32 348.47 L681.62 347.83 L681.91 347.15 L682.21 346.44 L682.51 345.72 L682.81 344.98 L683.11 344.26 L683.40 343.55 L683.70 342.88 L684.00 342.26 L684.30 341.70 L684.60 341.22 L684.89 340.83 L685.19 340.55 L685.49 340.40 L685.79 340.39 L686.08 340.54 L686.38 340.85 L686.68 341.35 L686.98 342.05 L687.28 342.95 L687.57 344.08 L687.87 345.43 L688.17 347.02 L688.47 348.85 L688.76 350.94 L689.06 353.27 L689.36 355.86 L689.66 358.70 L689.96 361.79 L690.25 365.12 L690.55 368.70 L690.85 372.51 L691.15 376.54 L691.45 380.78 L691.74 385.22 L692.04 389.85 L692.34 394.64 L692.64 399.57 L692.93 404.64 L693.23 409.81 L693.53 415.06 L693.83 420.37 L694.13 425.72 L694.42 431.08 L694.72 436.42 L695.02 441.72 L695.32 446.95 L695.62 452.09 L695.91 457.11 L696.21 461.99 L696.51 466.69 L696.81 471.20 L697.11 475.48 L697.40 479.53 L697.70 483.31 L698.00 486.81 L698.30 490.01 L698.59 492.89 L698.89 495.44 L699.19 497.64 L699.49 499.49 L699.79 500.96 L700.08 502.07 L700.38 502.80 L700.68 503.14 L700.98 503.11 L701.27 502.69 L701.57 501.90 L701.87 500.74 L702.17 499.22 L702.47 497.34 L702.76 495.12 L703.06 492.58 L703.36 489.72 L703.66 486.56 L703.96 483.13 L704.25 479.44 L704.55 475.52 L704.85 471.37 L705.15 467.04 L705.44 462.53 L705.74 457.87 L706.04 453.09 L706.34 448.21 L706.64 443.26 L706.93 438.25 L707.23 433.21 L707.53 428.17 L707.83 423.15 L708.13 418.16 L708.42 413.23 L708.72 408.38 L709.02 403.63 L709.32 398.99 L709.62 394.48 L709.91 390.12 L710.21 385.92 L710.51 381.88 L710.81 378.03 L711.10 374.37 L711.40 370.91 L711.70 367.65 L712.00 364.59 L712.30 361.75 L712.59 359.12 L712.89 356.70 L713.19 354.49 L713.49 352.49 L713.78 350.69 L714.08 349.09 L714.38 347.68 L714.68 346.46 L714.98 345.42 L715.27 344.55 L715.57 343.84 L715.87 343.27 L716.17 342.85 L716.47 342.56 L716.76 342.39 L717.06 342.32 L717.36 342.36 L717.66 342.48 L717.95 342.67 L718.25 342.93 L718.55 343.24 L718.85 343.60 L719.15 343.99 L719.44 344.41 L719.74 344.85 L720.04 345.29 L720.34 345.74 L720.64 346.18 L720.93 346.61 L721.23 347.02 L721.53 347.42 L721.83 347.78 L722.12 348.12 L722.42 348.43 L722.72 348.70 L723.02 348.94 L723.32 349.14 L723.61 349.31 L723.91 349.44 L724.21 349.53 L724.51 349.59 L724.81 349.62 L725.10 349.62 L725.40 349.58 L725.70 349.52 L726.00 349.43 L726.29 349.33 L726.59 349.20 L726.89 349.06 L727.19 348.90 L727.49 348.73 L727.78 348.56 L728.08 348.38 L728.38 348.20 L728.68 348.02 L728.98 347.85 L729.27 347.68 L729.57 347.51 L729.87 347.36 L730.17 347.21 L730.46 347.08 L730.76 346.96 L731.06 346.86 L731.36 346.77 L731.66 346.69 L731.95 346.63 L732.25 346.59 L732.55 346.56 L732.85 346.54 L733.15 346.54 L733.44 346.55 L733.74 346.58 L734.04 346.61 L734.34 346.66 L734.63 346.72 L734.93 346.78 L735.23 346.85 L735.53 346.93 L735.83 347.01 L736.12 347.09 L736.42 347.18 L736.72 347.27 L737.02 347.35 L737.32 347.44 L737.61 347.52 L737.91 347.60 L738.21 347.68 L738.51 347.75 L738.80 347.81 L739.10 347.87 L739.40 347.92 L739.70 347.97 L740.00 348.01 L740.29 348.04 L740.59 348.06 L740.89 348.08 L741.19 348.08 L741.49 348.09 L741.78 348.08 L742.08 348.07 L742.38 348.06 L742.68 348.04 L742.98 348.01 L743.27 347.98 L743.57 347.95 L743.87 347.91 L744.17 347.87 L744.46 347.83 L744.76 347.78 L745.06 347.74 L745.36 347.70 L745.66 347.65 L745.95 347.61 L746.25 347.56 L746.55 347.52 L746.85 347.48 L747.14 347.45 L747.44 347.41 L747.74 347.38 L748.04 347.35 L748.34 347.33 L748.63 347.31 L748.93 347.29 L749.23 347.27 L749.53 347.26 L749.83 347.25 L750.12 347.24 L750.42 347.24 L750.72 347.24 L751.02 347.25 L751.31 347.25 L751.61 347.26 L751.91 347.27 L752.21 347.29 L752.51 347.31 L752.80 347.32 L753.10 347.34 L753.40 347.36 L753.70 347.39 L754.00 347.41 L754.29 347.43 L754.59 347.46 L754.89 347.48 L755.19 347.51 L755.48 347.54 L755.78 347.56 L756.08 347.58 L756.38 347.61 L756.68 347.63 L756.97 347.65 L757.27 347.67 L757.57 347.69 L757.87 347.71 L758.17 347.73 L758.46 347.74 L758.76 347.76 L759.06 347.77 L759.36 347.78 L759.65 347.78 L759.95 347.79 L760.25 347.79 L760.55 347.79 L760.85 347.79 L761.14 347.78 L761.44 347.78 L761.74 347.77 L762.04 347.76 L762.34 347.75 L762.63 347.73 L762.93 347.71 L763.23 347.69 L763.53 347.67 L763.83 347.65 L764.12 347.63 L764.42 347.60 L764.72 347.58 L765.02 347.55 L765.31 347.53 L765.61 347.50 L765.91 347.47 L766.21 347.45 L766.51 347.42 L766.80 347.40 L767.10 347.37 L767.40 347.35 L767.70 347.33 L768.00 347.32 L768.29 347.30 L768.59 347.29 L768.89 347.28 L769.19 347.27 L769.48 347.27 L769.78 347.27 L770.08 347.27 L770.38 347.27 L770.68 347.28 L770.97 347.30 L771.27 347.31 L771.57 347.33 L771.87 347.36 L772.16 347.38 L772.46 347.41 L772.76 347.44 L773.06 347.47 L773.36 347.51 L773.65 347.54 L773.95 347.58 L774.25 347.62 L774.55 347.66 L774.85 347.69 L775.14 347.73 L775.44 347.76 L775.74 347.80 L776.04 347.83 L776.34 347.86 L776.63 347.88 L776.93 347.90 L777.23 347.92 L777.53 347.93 L777.82 347.93 L778.12 347.94 L778.42 347.93 L778.72 347.92 L779.02 347.91 L779.31 347.89 L779.61 347.86 L779.91 347.83 L780.21 347.79 L780.50 347.75 L780.80 347.71 L781.10 347.66 L781.40 347.60 L781.70 347.55 L781.99 347.49 L782.29 347.43 L782.59 347.37 L782.89 347.31 L783.19 347.25 L783.48 347.19 L783.78 347.14 L784.08 347.09 L784.38 347.05 L784.67 347.01 L784.97 346.99 L785.27 346.97 L785.57 346.96 L785.87 346.97 L786.16 346.99 L786.46 347.02 L786.76 347.07 L787.06 347.13 L787.36 347.21 L787.65 347.31 L787.95 347.43 L788.25 347.57 L788.55 347.72 L788.85 347.90 L789.14 348.10 L789.44 348.33 L789.74 348.57 L790.04 348.84 L790.33 349.13 L790.63 349.44 L790.93 349.77 L791.23 350.12 L791.53 350.50 L791.82 350.90 L792.12 351.31 L792.42 351.75 L792.72 352.20 L793.01 352.68 L793.31 353.17 L793.61 353.67 L793.91 354.19 L794.21 354.73 L794.50 355.27 L794.80 355.83 L795.10 356.40 L795.40 356.98 L795.70 357.56 L795.99 358.15 L796.29 358.75 L796.59 359.35 L796.89 359.96 L797.18 360.57 L797.48 361.18 L797.78 361.79 L798.08 362.40 L798.38 363.01 L798.67 363.61 L798.97 364.22 L799.27 364.82 L799.57 365.42 L799.87 366.01 L800.16 366.60 L800.46 367.18 L800.76 367.76 L801.06 368.33 L801.36 368.89 L801.65 369.46 L801.95 370.01 L802.25 370.56 L802.55 371.11 L802.84 371.65 L803.14 372.18 L803.44 372.71 L803.74 373.24 L804.04 373.76 L804.33 374.28 L804.63 374.79 L804.93 375.30 L805.23 375.81 L805.52 376.32 L805.82 376.82 L806.12 377.32 L806.42 377.82 L806.72 378.32 L807.01 378.82 L807.31 379.32 L807.61 379.82 L807.91 380.31 L808.21 380.81 L808.50 381.30 L808.80 381.80 L809.10 382.29 L809.40 382.79 L809.69 383.28 L809.99 383.77 L810.29 384.26 L810.59 384.75 L810.89 385.24 L811.18 385.73 L811.48 386.22 L811.78 386.70 L812.08 387.19 L812.38 387.67 L812.67 388.15 L812.97 388.63 L813.27 389.10 L813.57 389.57 L813.87 390.04 L814.16 390.51 L814.46 390.97 L814.76 391.43 L815.06 391.88 L815.35 392.34 L815.65 392.78 L815.95 393.23 L816.25 393.67 L816.55 394.11 L816.84 394.55 L817.14 394.98 L817.44 395.41 L817.74 395.83 L818.03 396.25 L818.33 396.67 L818.63 397.09 L818.93 397.51 L819.23 397.92 L819.52 398.33 L819.82 398.74 L820.12 399.15 L820.42 399.55 L820.72 399.96 L821.01 400.36 L821.31 400.76 L821.61 401.16 L821.91 401.56 L822.20 401.96 L822.50 402.36 L822.80 402.76 L823.10 403.15 L823.40 403.55 L823.69 403.95 L823.99 404.34 L824.29 404.74 L824.59 405.13 L824.89 405.52 L825.18 405.91 L825.48 406.30 L825.78 406.69 L826.08 407.08 L826.38 407.46 L826.67 407.85 L826.97 408.23 L827.27 408.61 L827.57 408.98 L827.86 409.35 L828.16 409.72 L828.46 410.09 L828.76 410.45 L829.06 410.81 L829.35 411.17 L829.65 411.52 L829.95 411.87 L830.25 412.22 L830.54 412.56 L830.84 412.90 L831.14 413.23 L831.44 413.56 L831.74 413.89 L832.03 414.21 L832.33 414.53 L832.63 414.85 L832.93 415.16 L833.23 415.47 L833.52 415.78 L833.82 416.09 L834.12 416.39 L834.42 416.69 L834.71 416.99 L835.01 417.29 L835.31 417.58 L835.61 417.87 L835.91 418.17 L836.20 418.46 L836.50 418.75 L836.80 419.04 L837.10 419.33 L837.40 419.62 L837.69 419.90 L837.99 420.19 L838.29 420.48 L838.59 420.77 L838.88 421.05 L839.18 421.34 L839.48 421.63 L839.78 421.91 L840.08 422.20 L840.37 422.48 L840.67 422.76 L840.97 423.05 L841.27 423.33 L841.57 423.61 L841.86 423.88 L842.16 424.16 L842.46 424.43 L842.76 424.70 L843.05 424.97 L843.35 425.24 L843.65 425.50 L843.95 425.76 L844.25 426.02 L844.54 426.27 L844.84 426.52 L845.14 426.77 L845.44 427.01 L845.74 427.25 L846.03 427.48 L846.33 427.71 L846.63 427.94 L846.93 428.16 L847.22 428.38 L847.52 428.59 L847.82 428.80 L848.12 429.01 L848.42 429.21 L848.71 429.41 L849.01 429.61 L849.31 429.80 L849.61 429.99 L849.91 430.18 L850.20 430.36 L850.50 430.55 L850.80 430.73 L851.10 430.91 L851.39 431.09 L851.69 431.26 L851.99 431.44 L852.29 431.62 L852.59 431.79 L852.88 431.97 L853.18 432.14 L853.48 432.31 L853.78 432.49 L854.08 432.66 L854.37 432.83 L854.67 433.01 L854.97 433.18 L855.27 433.35 L855.56 433.52 L855.86 433.70 L856.16 433.87 L856.46 434.04 L856.76 434.21 L857.05 434.38 L857.35 434.54 L857.65 434.71 L857.95 434.88 L858.25 435.04 L858.54 435.20 L858.84 435.36 L859.14 435.51 L859.44 435.67 L859.73 435.82 L860.03 435.96 L860.33 436.11 L860.63 436.25 L860.93 436.38 L861.22 436.52 L861.52 436.64 L861.82 436.77 L862.12 436.89 L862.42 437.00 L862.71 437.11 L863.01 437.22 L863.31 437.33 L863.61 437.42 L863.90 437.52 L864.20 437.61 L864.50 437.70 L864.80 437.78 L865.10 437.86 L865.39 437.94 L865.69 438.02 L865.99 438.09 L866.29 438.16 L866.59 438.23 L866.88 438.29 L867.18 438.36 L867.48 438.42 L867.78 438.48 L868.07 438.54 L868.37 438.60 L868.67 438.66 L868.97 438.72 L869.27 438.78 L869.56 438.84 L869.86 438.89 L870.16 438.95 L870.46 439.01 L870.76 439.07 L871.05 439.13 L871.35 439.18 L871.65 439.24 L871.95 439.30 L872.25 439.35 L872.54 439.41 L872.84 439.47 L873.14 439.52 L873.44 439.57 L873.73 439.63 L874.03 439.68 L874.33 439.73 L874.63 439.77 L874.93 439.82 L875.22 439.86 L875.52 439.90 L875.82 439.94 L876.12 439.97 L876.41 440.00 L876.71 440.03 L877.01 440.05 L877.31 440.07 L877.61 440.08 L877.90 440.09 L878.20 440.10" stroke="#1a70c0" stroke-width="1.1" fill="none" stroke-linejoin="round"/>
<path d="M461.50 405.30 L463.58 398.56 L465.67 392.19 L467.75 386.55 L469.84 381.94 L471.93 378.62 L474.01 376.78 L476.10 376.51 L478.18 377.84 L480.26 380.68 L482.35 384.88 L484.44 390.21 L486.52 396.38 L488.61 403.03 L490.69 409.82 L492.77 416.35 L494.86 422.27 L496.94 427.26 L499.03 431.03 L501.12 433.38 L503.20 434.18 L505.28 433.38 L507.37 431.03 L509.45 427.26 L511.54 422.27 L513.62 416.35 L515.71 409.82 L517.79 403.03 L519.88 396.38 L521.97 390.21 L524.05 384.88 L526.13 380.68 L528.22 377.84 L530.31 376.51 L532.39 376.78 L534.48 378.62 L536.56 381.94 L544.90 405.30 L619.96 197.40 L628.30 347.50 L690.85 347.50 L695.85 485.50 L705.44 485.50 L711.70 347.50 L786.76 347.50 L790.93 348.27 L793.02 352.58 L795.10 356.79 L797.18 360.90 L799.27 364.90 L801.36 368.80 L803.44 372.59 L805.52 376.28 L807.61 379.87 L809.69 383.35 L811.78 386.73 L813.87 390.00 L815.95 393.17 L818.03 396.24 L820.12 399.20 L822.20 402.06 L824.29 404.81 L826.38 407.47 L828.46 410.01 L830.55 412.46 L832.63 414.79 L834.72 417.03 L836.80 419.16 L838.88 421.19 L840.97 423.11 L843.06 424.93 L845.14 426.64 L847.23 428.26 L849.31 429.76 L851.39 431.17 L853.48 432.47 L855.57 433.66 L857.65 434.75 L859.73 435.74 L861.82 436.62 L863.90 437.40 L865.99 438.08 L868.08 438.65 L870.16 439.12 L872.25 439.48 L874.33 439.74 L876.41 439.90 L878.50 439.95" stroke="#ff3b30" stroke-width="1.15" fill="none" stroke-dasharray="7.5 3.8" stroke-dashoffset="0.97" stroke-linejoin="round"/></g>
<path d="M461.5 192.5v6M461.5 513.5v-6M482.5 192.5v3M482.5 513.5v-3M503.5 192.5v6M503.5 513.5v-6M524.5 192.5v3M524.5 513.5v-3M544.5 192.5v6M544.5 513.5v-6M565.5 192.5v3M565.5 513.5v-3M586.5 192.5v6M586.5 513.5v-6M607.5 192.5v3M607.5 513.5v-3M628.5 192.5v6M628.5 513.5v-6M649.5 192.5v3M649.5 513.5v-3M670.5 192.5v6M670.5 513.5v-6M690.5 192.5v3M690.5 513.5v-3M711.5 192.5v6M711.5 513.5v-6M732.5 192.5v3M732.5 513.5v-3M753.5 192.5v6M753.5 513.5v-6M774.5 192.5v3M774.5 513.5v-3M795.5 192.5v6M795.5 513.5v-6M815.5 192.5v3M815.5 513.5v-3M836.5 192.5v6M836.5 513.5v-6M857.5 192.5v3M857.5 513.5v-3M461.5 509.5h6M878.5 509.5h-6M461.5 486.5h3M878.5 486.5h-3M461.5 463.5h6M878.5 463.5h-6M461.5 440.5h3M878.5 440.5h-3M461.5 417.5h6M878.5 417.5h-6M461.5 394.5h3M878.5 394.5h-3M461.5 371.5h6M878.5 371.5h-6M461.5 347.5h3M878.5 347.5h-3M461.5 324.5h6M878.5 324.5h-6M461.5 301.5h3M878.5 301.5h-3M461.5 278.5h6M878.5 278.5h-6M461.5 255.5h3M878.5 255.5h-3M461.5 232.5h6M878.5 232.5h-6M461.5 209.5h3M878.5 209.5h-3" stroke="#262626" stroke-width="1" fill="none"/>
<rect x="461.5" y="192.5" width="417.0" height="321.0" fill="none" stroke="#262626" stroke-width="1"/>
<g font-family="Liberation Sans, Arial, sans-serif" font-size="13.33" fill="#363636">
<text x="461.5" y="529.1" text-anchor="middle">0</text>
<text x="503.2" y="529.1" text-anchor="middle">0.1</text>
<text x="544.9" y="529.1" text-anchor="middle">0.2</text>
<text x="586.6" y="529.1" text-anchor="middle">0.3</text>
<text x="628.3" y="529.1" text-anchor="middle">0.4</text>
<text x="670.0" y="529.1" text-anchor="middle">0.5</text>
<text x="711.7" y="529.1" text-anchor="middle">0.6</text>
<text x="753.4" y="529.1" text-anchor="middle">0.7</text>
<text x="795.1" y="529.1" text-anchor="middle">0.8</text>
<text x="836.8" y="529.1" text-anchor="middle">0.9</text>
<text x="456.6" y="235.2" text-anchor="end">2</text>
<text x="456.6" y="281.2" text-anchor="end">1.6</text>
<text x="456.6" y="327.2" text-anchor="end">1.2</text>
<text x="456.6" y="374.2" text-anchor="end">0.8</text>
<text x="456.6" y="420.2" text-anchor="end">0.4</text>
<text x="456.6" y="466.2" text-anchor="end">0</text>
<text x="456.6" y="512.2" text-anchor="end">-0.4</text>
</g>
<g font-family="Liberation Sans, Arial, sans-serif" fill="#363636">
<text x="669.4" y="186.8" text-anchor="middle" font-size="14.67" textLength="150.8" lengthAdjust="spacingAndGlyphs">Zero-Phase Response</text>
<text x="669.8" y="548" text-anchor="middle" font-size="14.67" textLength="263" lengthAdjust="spacingAndGlyphs">Normalized Frequency (×π rad/sample)</text>
<text transform="translate(424.3,353) rotate(-90)" text-anchor="middle" font-size="14.67" textLength="66.8" lengthAdjust="spacingAndGlyphs">Amplitude</text>
</g>
</svg>
<span class="t" style="left:28.30px;top:10px;font-size:11.0px;transform:scaleX(0.859);">DESIGNER</span>
<span class="t" style="left:135.70px;top:10px;font-size:11.0px;color:#fff;transform:scaleX(0.893);">ANALYSIS</span>
<span class="t" style="left:220.70px;top:10px;font-size:11.0px;color:#fff;transform:scaleX(0.912);">DISPLAY OPTIONS</span>
<span class="t" style="left:1168.90px;top:8px;font-size:12.0px;font-weight:700;color:#1a1a1a;transform:scaleX(0.771);">?</span>
<span class="t" style="left:28.50px;top:40px;font-size:11.9px;transform:scaleX(0.960);">New Session</span>
<span class="t" style="left:28.50px;top:64px;font-size:11.9px;transform:scaleX(0.962);">Open Session</span>
<span class="t" style="left:28.50px;top:88px;font-size:11.9px;transform:scaleX(0.922);">Save Session</span>
<span class="t" style="left:129.63px;top:73px;font-size:11.9px;transform:scaleX(1.069);">Import</span>
<span class="t" style="left:135.80px;top:89px;font-size:11.9px;transform:scaleX(0.979);">Filter</span>
<span class="t" style="left:78.00px;top:108px;font-size:10.6px;color:#5a5a5a;transform:scaleX(0.820);">FILE</span>
<span class="t" style="left:196.30px;top:69px;font-size:11.9px;transform:scaleX(0.936);">Lowpass</span>
<span class="t" style="left:210.50px;top:85px;font-size:11.9px;transform:scaleX(0.828);">FIR</span>
<span class="t" style="left:262.50px;top:69px;font-size:11.9px;transform:scaleX(0.963);">Highpass</span>
<span class="t" style="left:278.50px;top:85px;font-size:11.9px;transform:scaleX(0.828);">FIR</span>
<span class="t" style="left:329.30px;top:69px;font-size:11.9px;transform:scaleX(0.944);">Bandpass</span>
<span class="t" style="left:346.50px;top:85px;font-size:11.9px;transform:scaleX(0.828);">FIR</span>
<span class="t" style="left:398.00px;top:69px;font-size:11.9px;transform:scaleX(0.968);">Bandstop</span>
<span class="t" style="left:414.50px;top:85px;font-size:11.9px;transform:scaleX(0.828);">FIR</span>
<span class="t" style="left:462.00px;top:69px;font-size:11.9px;">Different...</span>
<span class="t" style="left:482.50px;top:85px;font-size:11.9px;transform:scaleX(0.828);">FIR</span>
<span class="t" style="left:531.00px;top:69px;font-size:11.9px;transform:scaleX(0.956);">Hilbert FIR</span>
<span class="t" style="left:603.30px;top:69px;font-size:11.9px;transform:scaleX(0.977);">Complex</span>
<span class="t" style="left:604.70px;top:85px;font-size:11.9px;transform:scaleX(0.868);">Lowpas<span style="color:#ccc">s</span>...</span>
<span class="t" style="left:406.30px;top:108px;font-size:10.6px;color:#5a5a5a;transform:scaleX(0.871);">RESPONSE</span>
<span class="t" style="left:698.00px;top:73px;font-size:11.9px;color:#b3b3b3;transform:scaleX(0.968);">Update</span>
<span class="t" style="left:704.20px;top:89px;font-size:11.9px;color:#b3b3b3;transform:scaleX(0.956);">Filter</span>
<span class="t" style="left:768.30px;top:40px;font-size:11.9px;">Undo</span>
<span class="t" style="left:768.30px;top:64px;font-size:11.9px;color:#b3b3b3;transform:scaleX(0.927);">Redo</span>
<span class="t" style="left:768.30px;top:88px;font-size:11.9px;color:#b3b3b3;transform:scaleX(0.933);">Restore</span>
<span class="t" style="left:737.80px;top:108px;font-size:10.6px;color:#5a5a5a;transform:scaleX(0.824);">FILTER</span>
<span class="t" style="left:845.30px;top:40px;font-size:11.9px;transform:scaleX(0.971);">Edit Pole-Zero</span>
<span class="t" style="left:845.30px;top:64px;font-size:11.9px;transform:scaleX(0.978);">Transform Filter</span>
<span class="t" style="left:845.30px;top:88px;font-size:11.9px;color:#b3b3b3;transform:scaleX(0.938);">Cascade Filters</span>
<span class="t" style="left:853.70px;top:108px;font-size:10.6px;color:#5a5a5a;transform:scaleX(0.942);">ACTIONS</span>
<span class="t" style="left:944.20px;top:73px;font-size:11.9px;transform:scaleX(0.979);">Settings</span>
<span class="t" style="left:943.00px;top:108px;font-size:10.6px;color:#5a5a5a;transform:scaleX(0.951);">OPTIONS</span>
<span class="t" style="left:1005.00px;top:73px;font-size:11.9px;transform:scaleX(0.961);">Export</span>
<span class="t" style="left:1003.30px;top:108px;font-size:10.6px;color:#5a5a5a;transform:scaleX(0.854);">EXPORT</span>
<span class="t" style="left:23.73px;top:126px;font-size:13.3px;transform:scaleX(0.971);">Filters</span>
<span class="t" style="left:4.70px;top:153px;font-size:12.0px;font-weight:700;transform:scaleX(0.994);">Name</span>
<span class="t" style="left:145.50px;top:153px;font-size:12.0px;font-weight:700;transform:scaleX(0.940);">Line</span>
<span class="t" style="left:265.90px;top:153px;font-size:12.0px;font-weight:700;transform:scaleX(0.988);">Sample...</span>
<span class="t" style="left:334.30px;top:153px;font-size:12.0px;font-weight:700;transform:scaleX(1.019);">Update ...</span>
<span class="t" style="left:25.00px;top:178px;font-size:12.0px;color:#3c3c3c;transform:scaleX(0.974);">arbrespfir1</span>
<span class="t" style="left:266.60px;top:178px;font-size:12.0px;color:#3c3c3c;transform:scaleX(0.974);">Norm...</span>
<span class="t" style="left:23.73px;top:275px;font-size:13.3px;color:#fff;transform:scaleX(0.974);">Parameters</span>
<span class="t" style="left:5.00px;top:300px;font-size:12.0px;transform:scaleX(0.968);">Arbitrary Response FIR - arbrespfir1</span>
<span class="t" style="left:22.60px;top:346px;font-size:12.0px;transform:scaleX(0.972);">Filter Order</span>
<span class="t" style="left:12.10px;top:374px;font-size:12.0px;">Order mode</span>
<span class="t" style="left:89.10px;top:374px;font-size:11.9px;transform:scaleX(0.978);">Specify</span>
<span class="t" style="left:169.80px;top:374px;font-size:12.0px;transform:scaleX(0.981);">Order</span>
<span class="t" style="left:213.00px;top:374px;font-size:11.9px;transform:scaleX(0.934);">100</span>
<span class="t" style="left:22.40px;top:409px;font-size:12.0px;transform:scaleX(0.912);">Response</span>
<span class="t" style="left:14.70px;top:439px;font-size:12.0px;">Number of bands</span>
<span class="t" style="left:119.80px;top:439px;font-size:11.9px;">1</span>
<span class="t" style="left:14.70px;top:466px;font-size:12.0px;transform:scaleX(0.947);">Response type</span>
<span class="t" style="left:119.20px;top:466px;font-size:11.9px;">Amplitudes</span>
<span class="t" style="left:14.50px;top:504px;font-size:12.0px;font-weight:700;transform:scaleX(0.927);">Band</span>
<span class="t" style="left:59.00px;top:504px;font-size:12.0px;font-weight:700;transform:scaleX(0.929);">Frequencies</span>
<span class="t" style="left:218.00px;top:504px;font-size:12.0px;font-weight:700;transform:scaleX(0.982);">Amplitudes</span>
<span class="t" style="left:59.00px;top:529px;font-size:12.0px;color:#3c3c3c;transform:scaleX(0.920);">FreqVect</span>
<span class="t" style="left:218.00px;top:529px;font-size:12.0px;color:#3c3c3c;transform:scaleX(0.974);">AmplVect</span>
<span class="t" style="left:22.20px;top:661px;font-size:12.0px;transform:scaleX(1.032);">Algorithm</span>
<span class="t" style="left:12.50px;top:689px;font-size:12.0px;transform:scaleX(1.006);">Design method</span>
<span class="t" style="left:106.30px;top:689px;font-size:11.9px;">Frequency sampling</span>
<span class="t" style="left:22.20px;top:724px;font-size:12.0px;transform:scaleX(1.025);">Algorithm Options</span>
<span class="t" style="left:429.20px;top:128px;font-size:12.0px;transform:scaleX(0.983);">1 (active): Magnitude</span>
<span class="t" style="left:441.70px;top:149px;font-size:12.4px;transform:scaleX(1.011);">arbrespfir1</span>
<span class="t" style="left:430.70px;top:568px;font-size:12.0px;transform:scaleX(1.078);">Filter Information</span>
<span class="t" style="left:408.70px;top:594px;font-size:12.0px;font-weight:700;transform:scaleX(1.020);">Information</span>
<span class="t" style="left:647.00px;top:594px;font-size:12.0px;font-weight:700;transform:scaleX(0.979);">Value</span>
<span class="t" style="left:429.00px;top:618px;font-size:12.0px;color:#3c3c3c;transform:scaleX(0.974);">arbrespfir1</span>
<span class="t" style="left:447.70px;top:640px;font-size:12.0px;color:#3c3c3c;transform:scaleX(0.960);">FIR Digital Filter (real)</span>
<span class="t" style="left:465.40px;top:662px;font-size:12.0px;color:#3c3c3c;transform:scaleX(0.969);">Filter Structure</span>
<span class="t" style="left:647.00px;top:662px;font-size:12.0px;color:#3c3c3c;transform:scaleX(0.967);">Direct-Form FIR</span>
<span class="t" style="left:465.40px;top:684px;font-size:12.0px;color:#3c3c3c;transform:scaleX(0.986);">Filter Length</span>
<span class="t" style="left:647.00px;top:684px;font-size:12.0px;color:#3c3c3c;transform:scaleX(0.885);">101</span>
<span class="t" style="left:465.40px;top:706px;font-size:12.0px;color:#3c3c3c;transform:scaleX(0.920);">Stable</span>
<span class="t" style="left:647.00px;top:706px;font-size:12.0px;color:#3c3c3c;transform:scaleX(0.868);">Yes</span>
<span class="t" style="left:465.40px;top:728px;font-size:12.0px;color:#3c3c3c;transform:scaleX(0.923);">Linear Phase</span>
<span class="t" style="left:647.00px;top:728px;font-size:12.0px;color:#3c3c3c;transform:scaleX(0.926);">Yes (Type 1)</span>
<span class="t" style="left:906.10px;top:126px;font-size:13.3px;transform:scaleX(0.969);">Analysis Options</span>
<span class="t" style="left:917.00px;top:152px;font-size:12.0px;transform:scaleX(0.973);">Frequency Options</span>
<span class="t" style="left:911.30px;top:184px;font-size:12.0px;transform:scaleX(0.990);">Frequency Scale</span>
<span class="t" style="left:1051.30px;top:183px;font-size:12.0px;transform:scaleX(0.986);">Linear</span>
<span class="t" style="left:911.30px;top:209px;font-size:12.0px;transform:scaleX(0.991);">Frequency Range</span>
<span class="t" style="left:1051.30px;top:208px;font-size:12.0px;transform:scaleX(0.948);">Auto</span>
<span class="t" style="left:911.30px;top:234px;font-size:12.0px;transform:scaleX(0.992);">Number of Points</span>
<span class="t" style="left:1051.30px;top:233px;font-size:12.0px;transform:scaleX(0.951);">8192</span>
<span class="t" style="left:917.00px;top:272px;font-size:12.0px;transform:scaleX(1.011);">Magnitude Options</span>
<span class="t" style="left:911.30px;top:304px;font-size:12.0px;transform:scaleX(0.989);">Magnitude Mode</span>
<span class="t" style="left:1051.30px;top:303px;font-size:12.0px;transform:scaleX(0.981);">Zero Phase</span>
<span class="t" style="left:911.30px;top:326px;font-size:12.0px;transform:scaleX(0.994);">Normalize Magnitude</span>
<span class="t" style="left:936.00px;top:721px;font-size:12.0px;transform:scaleX(0.960);">Help</span>
<span class="t" style="left:1069.60px;top:721px;font-size:12.0px;color:#b3b3b3;">Cancel</span>
<span class="t" style="left:1153.20px;top:721px;font-size:12.0px;color:#b3b3b3;transform:scaleX(0.969);">Apply</span>
<span class="t" style="left:989.70px;top:751px;font-size:12.0px;">Frequency Normalization = Normalized</span>
<span class="t" style="left:917.60px;top:722px;font-size:12.0px;font-weight:700;color:#2266c4;transform:scaleX(0.829);">?</span>
</body></html>
